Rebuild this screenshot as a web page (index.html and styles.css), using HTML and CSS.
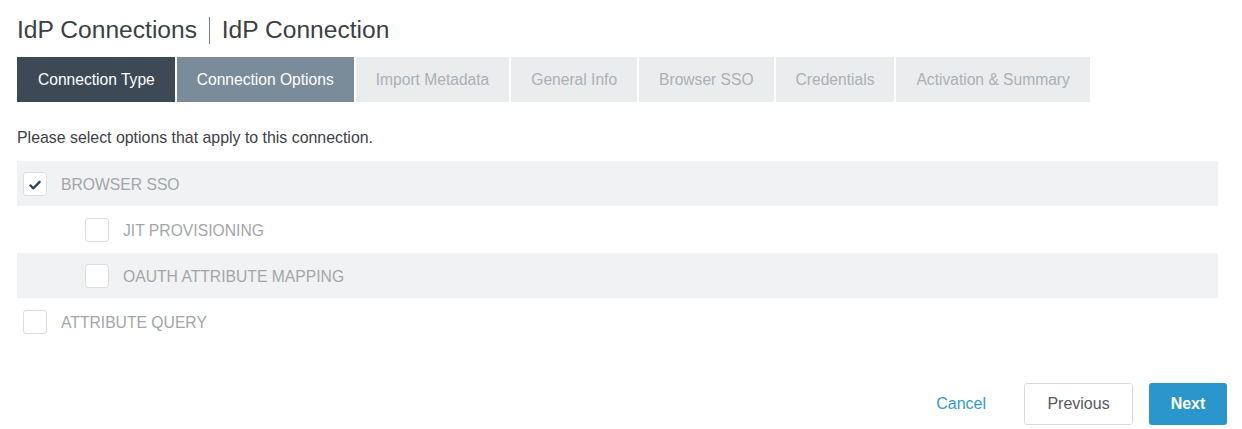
FILE: index.html
```html
<!DOCTYPE html>
<html>
<head>
<meta charset="utf-8">
<link rel="stylesheet" href="styles.css">
</head>
<body>
<div class="page">
  <h1 class="title">IdP Connections <span class="sep"></span> IdP Connection</h1>
  <div class="tabs">
    <div class="tab done">Connection Type</div>
    <div class="tab active">Connection Options</div>
    <div class="tab">Import Metadata</div>
    <div class="tab">General Info</div>
    <div class="tab">Browser SSO</div>
    <div class="tab">Credentials</div>
    <div class="tab">Activation &amp; Summary</div>
  </div>
  <p class="intro">Please select options that apply to this connection.</p>
  <div class="options">
    <div class="opt shaded">
      <span class="box checked"><svg viewBox="0 0 24 24" width="24" height="24"><path d="M7 12.5 L10.3 15.6 L17 8.6" fill="none" stroke="#2e4760" stroke-width="2.6" stroke-linecap="round" stroke-linejoin="round"/></svg></span>
      <span class="label">BROWSER SSO</span>
    </div>
    <div class="opt sub">
      <span class="box"></span>
      <span class="label">JIT PROVISIONING</span>
    </div>
    <div class="opt sub shaded">
      <span class="box"></span>
      <span class="label">OAUTH ATTRIBUTE MAPPING</span>
    </div>
    <div class="opt">
      <span class="box"></span>
      <span class="label">ATTRIBUTE QUERY</span>
    </div>
  </div>
  <div class="actions">
    <span class="cancel">Cancel</span>
    <span class="btn prev">Previous</span>
    <span class="btn next">Next</span>
  </div>
</div>
</body>
</html>
```

FILE: styles.css
```css
html, body {
  margin: 0;
  padding: 0;
  background: #ffffff;
  font-family: "Liberation Sans", Arial, sans-serif;
}
.page {
  padding: 0 14px 0 17px;
}
.title {
  margin: 0;
  padding-top: 15px;
  height: 57px;
  box-sizing: border-box;
  font-size: 24.6px;
  font-weight: normal;
  color: #3a3f44;
  line-height: 30px;
  display: flex;
  align-items: flex-start;
  white-space: pre;
}
.sep {
  display: inline-block;
  width: 1px;
  height: 27px;
  margin: 2px 5px 0 5px;
  background: #7a7f84;
}
.tabs {
  display: flex;
  gap: 2px;
  height: 45px;
}
.tab {
  display: flex;
  align-items: center;
  padding: 0 20px;
  background: #ebeced;
  color: #abb0b5;
  font-size: 15.6px;
}
.tab.done {
  background: #3d4a55;
  color: #ffffff;
  padding: 0 20px 0 21px;
}
.tab.active {
  background: #7a8b9a;
  color: #ffffff;
}
.intro {
  margin: 0;
  padding-top: 27px;
  height: 59px;
  box-sizing: border-box;
  font-size: 15.9px;
  color: #3c4146;
}
.options {
  width: 1201px;
  display: flex;
  flex-direction: column;
  gap: 1px;
}
.opt {
  height: 45px;
  display: flex;
  align-items: center;
  padding-left: 6px;
  gap: 14px;
}
.opt.shaded {
  background: #f1f2f3;
}
.opt.sub {
  padding-left: 68px;
}
.box {
  width: 24px;
  height: 24px;
  box-sizing: border-box;
  border: 1px solid #dcdee0;
  border-radius: 3px;
  background: #ffffff;
  display: flex;
}
.label {
  font-size: 15.7px;
  color: #a3a6a9;
  padding-top: 2px;
}
.actions {
  display: flex;
  justify-content: flex-end;
  align-items: center;
  margin-top: 39px;
  padding-right: 1px;
  gap: 16px;
}
.cancel {
  color: #3598d3;
  font-size: 16px;
  margin-right: 22px;
}
.btn {
  height: 42px;
  box-sizing: border-box;
  display: flex;
  align-items: center;
  justify-content: center;
  border-radius: 3px;
  font-size: 16px;
}
.prev {
  width: 109px;
  border: 1px solid #d8dadc;
  color: #555a5f;
  background: #ffffff;
}
.next {
  width: 78px;
  background: #2b96cc;
  color: #ffffff;
  font-weight: bold;
}
```
